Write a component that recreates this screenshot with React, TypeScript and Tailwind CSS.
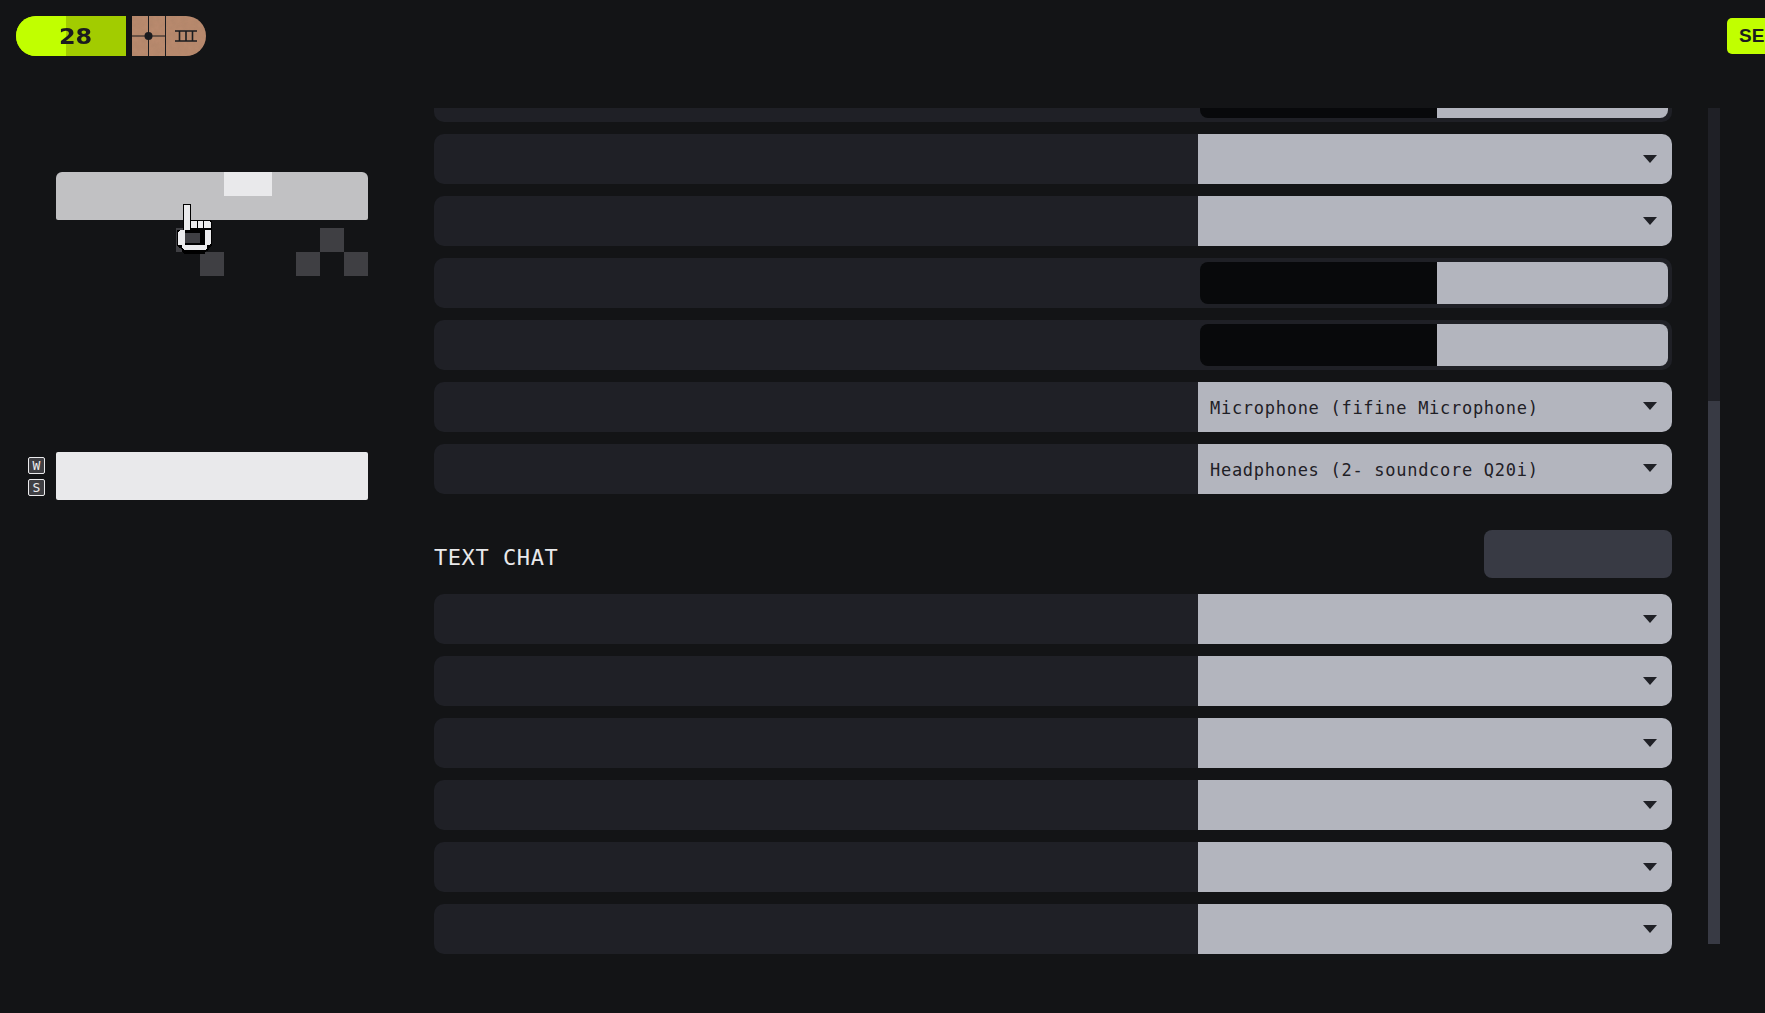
import React from "react";

const mono = "font-['DejaVu_Sans_Mono',monospace]";

function SelectRow({ label }: { label?: string }) {
  return (
    <div className="flex h-[50px] shrink-0 rounded-[10px] bg-[#1f2026]">
      <div className="flex-1" />
      <div className="flex w-[474px] items-center justify-between rounded-r-[10px] bg-[#b3b5be] pl-3 pr-[15px]">
        <span className={`mt-1 text-[17px] tracking-[0.72px] text-[#1f2026] ${mono}`}>{label}</span>
        <svg width="14" height="8" viewBox="0 0 14 8" className={label ? "-mt-[2px]" : "mt-0"}>
          <path d="M0 0h14L7 8z" fill="#1f2026" />
        </svg>
      </div>
    </div>
  );
}

function SliderRow() {
  return (
    <div className="flex h-[50px] shrink-0 rounded-[10px] bg-[#1f2026]">
      <div className="flex-1" />
      <div className="flex w-[474px] py-1 pl-[2px] pr-1">
        <div className="w-[237px] rounded-l-[8px] bg-[#08090b]" />
        <div className="flex-1 rounded-r-[8px] bg-[#b3b5be]" />
      </div>
    </div>
  );
}

// pixel hand that sits over the key grid
function Cursor() {
  return (
    <svg width="50" height="62" viewBox="0 0 50 62" shapeRendering="crispEdges" className="absolute left-[170px] top-[198px]">
      <path d="M13 6h8v16h19l2 2v23l-3 3v2l-3 1-1 3H14l-2-3v-2l-3-1-2-3V32h6z" fill="#000" />
      <path d="M14 7h6v25h-6zM21 23h6v7h-6zM28 23h5v7h-5zM34 23h5l2 2v5h-7z" fill="#ebebed" />
      <path d="M10 32h5v15h-7V34zM35 32h6v13l-2 2h-4zM12 47h25v3l-2 2H14l-2-2z" fill="#ebebed" />
      <rect x="15" y="35" width="15" height="10" fill="#3f3f43" />
    </svg>
  );
}

export default function App() {
  return (
    <div className="flex h-[1013px] w-full flex-col overflow-hidden bg-[#131416]">
      <header className="flex h-[72px] shrink-0 items-center pl-4">
        <div className="relative flex h-10 w-[110px] items-center overflow-hidden rounded-l-[20px] bg-[#a2cc00]">
          <div className="h-full w-[50px] bg-[#c1ff00]" />
          <span className="absolute left-[45px] top-[6px] inline-block scale-x-[1.14] font-['DejaVu_Sans',sans-serif] text-[21px] font-bold text-[#1a1b1f]">
            28
          </span>
        </div>
        <div className="relative ml-[6px] h-10 w-[74px] overflow-hidden rounded-r-[20px] bg-[#b98a6e]">
          <svg width="74" height="40" viewBox="0 0 74 40" className="absolute inset-0">
            <filter id="copper">
              <feTurbulence type="fractalNoise" baseFrequency="0.18" numOctaves="3" seed="4" />
              <feColorMatrix values="0 0 0 0 0.35  0 0 0 0 0.2  0 0 0 0 0.12  0.9 0 0 0 -0.25" />
            </filter>
            <rect width="74" height="40" filter="url(#copper)" opacity="0.45" />
            <path d="M16.5 0v40M33.5 0v40M0 20h33.5" stroke="#1a1b1f" strokeWidth="1" fill="none" />
            <circle cx="16.5" cy="20" r="4" fill="#1a1b1f" />
            <path d="M43 15h22M43 25h22M47.5 15v10M54 15v10M60.5 15v10" stroke="#1a1b1f" strokeWidth="1.6" fill="none" />
          </svg>
        </div>
        <div className="ml-auto flex h-9 w-[38px] items-center overflow-hidden rounded-l-[5px] bg-[#c1ff00] pl-3 font-['Liberation_Sans',sans-serif] text-[19px] font-bold text-[#1a1b1f]">
          SE
        </div>
      </header>

      <main className="relative flex min-h-0 flex-1">
        <aside className="relative -mt-[72px] w-[434px] shrink-0 pl-7 pt-[172px]">
          <div className="ml-7 w-[312px]">
            <div className="h-12 rounded-t-[6px] rounded-b-[2px] bg-[#c1c1c3]">
              <div className="ml-[168px] h-6 w-12 bg-[#e9e9eb]" />
            </div>
            <div className="mt-2 grid grid-cols-[repeat(13,24px)] grid-rows-[24px_24px]">
              <div className="col-start-6 row-start-1 bg-[#3f3f43]" />
              <div className="col-start-12 row-start-1 bg-[#3f3f43]" />
              <div className="col-start-7 row-start-2 bg-[#3f3f43]" />
              <div className="col-start-11 row-start-2 bg-[#3f3f43]" />
              <div className="col-start-13 row-start-2 bg-[#3f3f43]" />
            </div>
          </div>
          <div className="mt-[176px] flex items-center gap-[11px]">
            <div className="flex w-[17px] flex-col gap-[5px]">
              {["W", "S"].map((k) => (
                <div
                  key={k}
                  className={`flex h-[17px] items-center justify-center rounded-[2px] border border-[#ebebed] bg-[#3f3f43] text-[13px] leading-none text-[#ebebed] ${mono}`}
                >
                  {k}
                </div>
              ))}
            </div>
            <div className="h-12 w-[312px] rounded-[2px] bg-[#e9e9eb]" />
          </div>
          <Cursor />
        </aside>

        <section className="mt-9 h-[846px] w-[1238px] shrink-0 overflow-hidden">
          <div className="-mt-9 flex flex-col gap-3">
            <SliderRow />
            <SelectRow />
            <SelectRow />
            <SliderRow />
            <SliderRow />
            <SelectRow label="Microphone (fifine Microphone)" />
            <SelectRow label="Headphones (2- soundcore Q20i)" />
          </div>
          <div className="mb-4 mt-9 flex h-12 items-center justify-between">
            <h2 className={`pt-[7px] text-[22px] tracking-[0.56px] text-[#e9e9eb] ${mono}`}>TEXT CHAT</h2>
            <div className="h-12 w-[188px] rounded-[8px] bg-[#383a44]" />
          </div>
          <div className="flex flex-col gap-3">
            {[0, 1, 2, 3, 4, 5].map((i) => (
              <SelectRow key={i} />
            ))}
          </div>
        </section>

        <div className="ml-9 mt-9 flex h-[836px] w-3 flex-col bg-[#1f2026]">
          <div className="mt-[293px] flex-1 bg-[#383a44]" />
        </div>
      </main>
    </div>
  );
}
